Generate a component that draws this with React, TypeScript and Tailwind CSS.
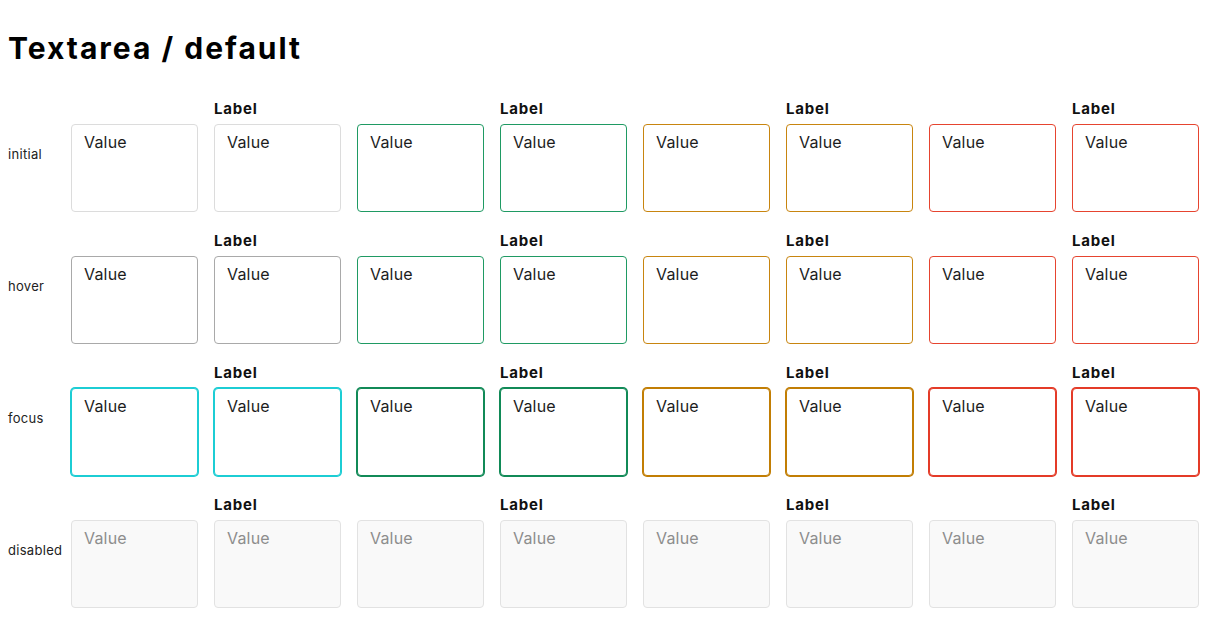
import type { ReactNode } from "react"

type Tone = "default" | "success" | "warning" | "error"
type State = "initial" | "hover" | "focus" | "disabled"

const STATES: State[] = ["initial", "hover", "focus", "disabled"]

const COLUMNS: { tone: Tone; label: boolean }[] = [
  { tone: "default", label: false },
  { tone: "default", label: true },
  { tone: "success", label: false },
  { tone: "success", label: true },
  { tone: "warning", label: false },
  { tone: "warning", label: true },
  { tone: "error", label: false },
  { tone: "error", label: true },
]

// border classes per tone and state, written out so tailwind picks them up
const BORDER: Record<Tone, Record<Exclude<State, "disabled">, string>> = {
  default: {
    initial: "border-[#dcdcdc]",
    hover: "border-[#a9a9a9]",
    focus: "border-[#1ccdd4] ring-1 ring-[#1ccdd4]",
  },
  success: {
    initial: "border-[#1f9a63]",
    hover: "border-[#1f9a63]",
    focus: "border-[#118a57] ring-1 ring-[#118a57]",
  },
  warning: {
    initial: "border-[#c8850f]",
    hover: "border-[#c8850f]",
    focus: "border-[#c27e04] ring-1 ring-[#c27e04]",
  },
  error: {
    initial: "border-[#e6442f]",
    hover: "border-[#e6442f]",
    focus: "border-[#e43b28] ring-1 ring-[#e43b28]",
  },
}

function Field({ tone, state, label }: { tone: Tone; state: State; label: boolean }) {
  const disabled = state === "disabled"
  const box = disabled
    ? "border-[#e2e2e2] bg-[#f9f9f9] text-[#8d8d8d]"
    : `${BORDER[tone][state]} bg-white text-[#1c1c1c]`

  return (
    <div className="flex flex-col">
      <div className="h-5 text-[15px] font-bold leading-[18px] tracking-[0.8px] text-[#111]">{label ? "Label" : ""}</div>
      <div className={`mt-1 h-[88px] w-[127px] rounded-[4px] border pl-[12px] pt-[5px] text-[16px] leading-6 tracking-[0.2px] ${box}`}>
        Value
      </div>
    </div>
  )
}

function Row({ state, children }: { state: State; children: ReactNode }) {
  return (
    <>
      <div className="self-center pb-[2px] text-[13px] tracking-[0.3px] text-[#222]">{state}</div>
      {children}
    </>
  )
}

export default function App() {
  return (
    <div className="min-h-screen bg-white px-2 pt-[30px] font-['Inter','Liberation_Sans',sans-serif]">
      <h1 className="h-9 text-[30px] font-bold leading-9 tracking-[2px] text-black">Textarea / default</h1>
      <div className="mt-[34px] grid grid-cols-[47px_repeat(8,127px)] gap-x-4 gap-y-5">
        {STATES.map((state) => (
          <Row key={state} state={state}>
            {COLUMNS.map((c, i) => (
              <Field key={i} tone={c.tone} state={state} label={c.label} />
            ))}
          </Row>
        ))}
      </div>
    </div>
  )
}
